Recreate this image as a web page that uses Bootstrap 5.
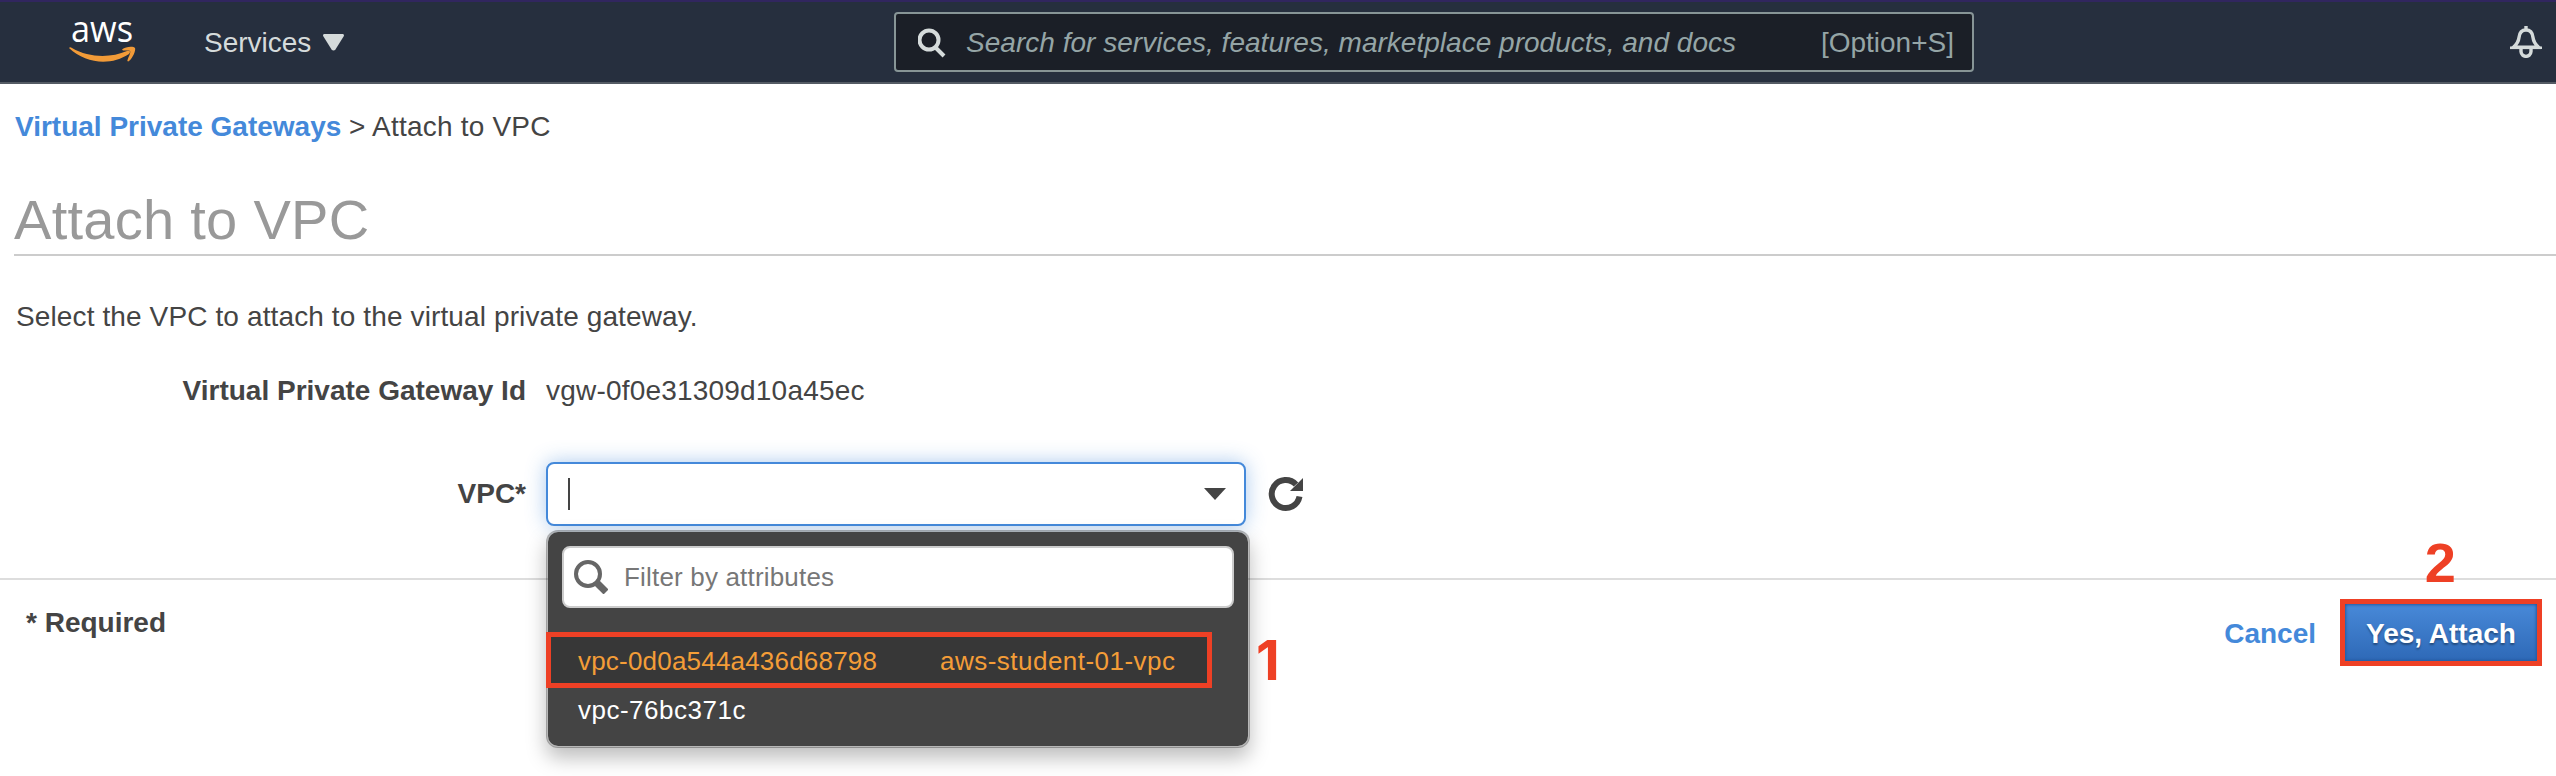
<!DOCTYPE html>
<html lang="en">
<head>
<meta charset="utf-8">
<meta name="viewport" content="width=device-width, initial-scale=1">
<title>Attach to VPC</title>
<link href="https://cdn.jsdelivr.net/npm/bootstrap@5.3.0/dist/css/bootstrap.min.css" rel="stylesheet">
<style>
body{font-family:"Liberation Sans",Arial,sans-serif;font-size:28px;line-height:34px;color:#444;background:#fff;height:776px;overflow:hidden}
.topbar{height:84px;background:#262f3e;border-top:2px solid #31265f;border-bottom:2px solid #545b64;color:#d5dbdb;padding:0 14px 0 69px}
.logo{width:68px;height:56px;margin-top:8px;overflow:visible}
.services{margin-left:67px;width:115px;padding-top:1px}
.search{width:1080px;height:60px;margin-left:550px;border:2px solid #879596;border-radius:4px;background:#1b1f27;color:#95a5a6;padding:1px 18px 0 22px}
.search-hint{margin-left:20px;letter-spacing:.02px}
.crumbs{padding:26px 15px 0;height:84px}
.here{letter-spacing:.2px}
.crumbs a,.cancel{color:#4489da;font-weight:bold;text-decoration:none}
.title{font-size:56px;line-height:64px;font-weight:400;color:#999;margin:20px 0 0 14px;height:68px;border-bottom:2px solid #ccc;letter-spacing:.28px}
.intro{margin:44px 16px 0;height:34px;letter-spacing:.12px}
.field-row{display:flex;align-items:center}
.field-id{margin-top:40px}
.field-vpc{margin-top:54px}
.field-label{width:526px;text-align:right;font-weight:bold;margin-right:20px}
.gateway-id{letter-spacing:.2px}
.combo{width:700px;height:64px;border:2px solid #4489da;border-radius:8px;background:#fff;box-shadow:0 0 20px rgba(68,137,218,.45);padding:0 18px 0 20px}
.caret{width:2px;height:32px;background:#444}
.drop{position:absolute;top:68px;left:0;width:704px;height:218px;background:#444;background-clip:padding-box;border:2px solid rgba(0,0,0,.28);border-radius:12px;box-shadow:0 10px 20px rgba(0,0,0,.26);padding:14px;font-size:26px;line-height:30px;z-index:3}
.filter{height:62px;border:2px solid #ccc;border-radius:8px;background:#fff;color:#777;padding:0 10px;letter-spacing:.18px}
.opt{width:666px;height:56px;margin:24px 0 0 -16px;border:5px solid #ee4025;background:#373737;color:#f49d37;padding:1px 0 0 27px}
.opt-id{width:362px;letter-spacing:.2px}
.opt-name{letter-spacing:.48px}
.opt-plain{margin:7px 0 0 16px;letter-spacing:.5px}
.reload{width:36px;height:36px;margin-left:22px}
.mark-num{position:absolute;color:#ee4025;font-weight:bold;font-size:56px;line-height:56px;z-index:4}
.mark-one{left:710px;top:170px;font-family:Inter,"Liberation Sans",sans-serif;font-size:55px}
.mark-two{right:86px;top:-64px}
.foot{height:198px;border-top:2px solid #ddd;margin-top:52px;padding:0 14px 0 26px}
.required{margin-top:26px}
.actions{height:67px;margin-top:19px}
.cancel{margin-right:24px;padding-top:3px}
.ok{width:202px;height:67px;border:5px solid #ee4025;border-radius:0;background:linear-gradient(#4889d8,#2e69b7);box-shadow:inset 0 0 3px 1px #245a9f;color:#fff;font-size:28px;font-weight:bold;line-height:34px;padding:3px 0 0;text-shadow:0 2px 2px rgba(0,0,0,.35)}
</style>
</head>
<body>
<nav class="topbar d-flex align-items-center">
  <svg class="logo align-self-start" viewBox="0 0 68 56"><text x="2" y="32" font-family="Open Sans" font-size="36" fill="#fff" font-weight="500" textLength="62" lengthAdjust="spacingAndGlyphs">aws</text>
    <path d="M0 38Q1 36.500 3 38C20 48 42 48 58 41C61 40 62 42 60 44C42 56 17 54 0 38Z" fill="#f29b38"/><path d="M53 39.500C57 36 65 36 66 38S64 48 60 51C59 52 58 51 58.500 50C60 46 62 42 61 41S56 40.500 54 40.500Z" fill="#f29b38"/></svg>
  <span class="services text-nowrap">Services</span>
  <svg class="ms-1" width="21" height="17" viewBox="0 0 20 20" preserveAspectRatio="none"><path d="M1 0H19Q20 0 20 2L12 18Q10 21 8 18L0 2Q0 0 1 0Z" fill="#d5dbdb"/></svg>
  <div class="search d-flex align-items-center">
    <svg width="28" height="30" viewBox="0 0 28 30" fill="none" stroke="#d5dbdb" stroke-width="4"><circle cx="11" cy="12" r="9.5"/><path d="M17 19L26 28"/></svg>
    <span class="search-hint fst-italic">Search for services, features, marketplace products, and docs</span>
    <span class="ms-auto">[Option+S]</span>
  </div>
  <svg class="ms-auto" width="32" height="32" viewBox="0 0 32 32" fill="none" stroke="#d5dbdb" stroke-width="3.400"><path d="M3.500 21.300C7 18 8.500 16 9 11.500C9.500 6.500 12 4 16 4S22.500 6.500 23 11.500C23.500 16 25 18 28.500 21.300ZM16 0V4M11 22V25.500C11.500 32 20.500 32 21 25.500V22"/><path d="M0 21.800H32" stroke-width="2.600"/></svg>
</nav>
<main>
  <div class="crumbs"><a href="#">Virtual Private Gateways</a> <span class="here">&gt; Attach to VPC</span></div>
  <h1 class="title">Attach to VPC</h1>
  <p class="intro">Select the VPC to attach to the virtual private gateway.</p>
  <div class="field-row field-id"><span class="field-label">Virtual Private Gateway Id</span><span class="gateway-id">vgw-0f0e31309d10a45ec</span></div>
  <div class="field-row field-vpc"><span class="field-label">VPC*</span>
    <div class="position-relative">
      <div class="combo d-flex align-items-center justify-content-between"><span class="caret"></span><svg width="22" height="12" viewBox="0 0 22 12"><path d="M0 0H22L11 12Z" fill="#444"/></svg></div>
      <div class="drop">
        <div class="filter d-flex align-items-center"><svg width="34" height="34" viewBox="0 0 34 34" fill="none" stroke="#666"><circle cx="14" cy="14" r="12" stroke-width="4"/><path d="M23 23L32 32" stroke-width="7"/></svg><span class="ms-3">Filter by attributes</span></div>
        <div class="opt d-flex align-items-center"><span class="opt-id">vpc-0d0a544a436d68798</span><span class="opt-name">aws-student-01-vpc</span></div>
        <div class="opt-plain text-white">vpc-76bc371c</div>
      </div>
      <span class="mark-num mark-one">1</span>
    </div>
    <svg class="reload" viewBox="0 0 36 36"><path d="M28 8.500A14 14 0 1 0 31.500 20.500" fill="none" stroke="#444" stroke-width="6"/><path d="M35 2V15H22Z" fill="#444"/></svg>
  </div>
  <div class="foot d-flex">
    <b class="required">* Required</b>
    <div class="actions ms-auto d-flex align-items-center position-relative">
      <a class="cancel" href="#">Cancel</a><button class="btn ok">Yes, Attach</button>
      <span class="mark-num mark-two">2</span>
    </div>
  </div>
</main>
<script src="https://cdn.jsdelivr.net/npm/bootstrap@5.3.0/dist/js/bootstrap.bundle.min.js"></script>
</body>
</html>
